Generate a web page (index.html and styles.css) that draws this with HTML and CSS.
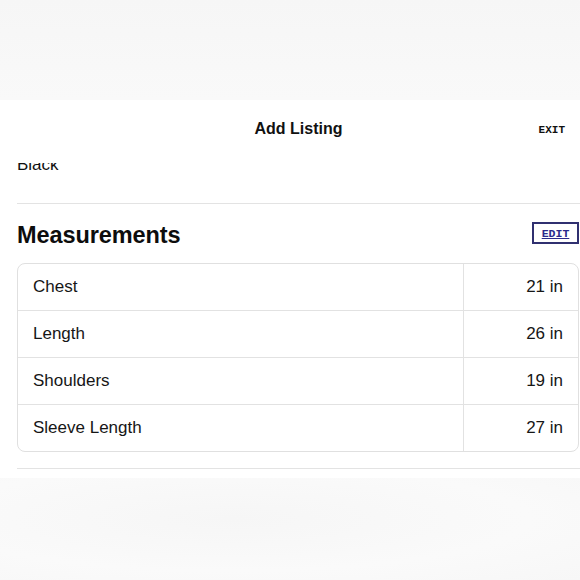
FILE: index.html
```html
<!DOCTYPE html>
<html>
<head>
<meta charset="utf-8">
<link rel="stylesheet" href="styles.css">
</head>
<body>
<div class="backdrop-top"></div>
<main class="panel">
  <header class="bar">
    <div class="bar-side"></div>
    <h1 class="bar-title">Add Listing</h1>
    <div class="bar-side bar-right"><span class="exit">EXIT</span></div>
  </header>
  <section class="content">
    <p class="prev-value">Black</p>
    <hr class="divider">
    <div class="section-head">
      <h2 class="section-title">Measurements</h2>
      <a class="edit-btn" href="#">EDIT</a>
    </div>
    <div class="table">
      <div class="row"><div class="cell label">Chest</div><div class="cell value">21 in</div></div>
      <div class="row"><div class="cell label">Length</div><div class="cell value">26 in</div></div>
      <div class="row"><div class="cell label">Shoulders</div><div class="cell value">19 in</div></div>
      <div class="row"><div class="cell label">Sleeve Length</div><div class="cell value">27 in</div></div>
    </div>
    <hr class="divider bottom">
  </section>
</main>
<div class="backdrop-bottom"></div>
</body>
</html>
```
FILE: styles.css
```css
html, body {
  margin: 0;
  padding: 0;
}
body {
  width: 580px;
  height: 580px;
  overflow: hidden;
  background: #f8f8f8;
  font-family: "Liberation Sans", Arial, sans-serif;
  color: #111;
}
.backdrop-top {
  height: 100px;
  background: linear-gradient(180deg, #f6f6f6 0%, #f9f9f9 100%);
}
.panel {
  background: #fff;
  height: 378px;
  overflow: hidden;
  display: flex;
  flex-direction: column;
}
.bar {
  height: 58px;
  flex: none;
  display: flex;
  align-items: center;
  padding: 0 15px 0 17px;
  background: #fff;
  position: relative;
  z-index: 1;
}
.bar-side {
  flex: 1;
}
.bar-right {
  display: flex;
  justify-content: flex-end;
}
.bar-title {
  margin: 0;
  font-size: 16px;
  font-weight: 700;
  color: #111;
  padding-left: 15px;
}
.exit {
  font-family: "Liberation Mono", "DejaVu Sans Mono", monospace;
  font-weight: 700;
  font-size: 11px;
  color: #111;
  margin-top: 1px;
}
.content {
  flex: 1;
  overflow: hidden;
  padding: 0 1px 0 17px;
}
.prev-value {
  margin: -3px 0 0 0;
  font-size: 17px;
  line-height: 20px;
  color: #111;
  clip-path: inset(8px 0 0 0);
}
.divider {
  border: none;
  border-top: 1px solid #e3e3e3;
  margin: 28px -1px 0 0;
  height: 0;
}
.section-head {
  display: flex;
  align-items: center;
  justify-content: space-between;
  height: 59px;
}
.section-title {
  margin: 3px 0 0 0;
  font-size: 23.5px;
  font-weight: 700;
  color: #0d0d0d;
  letter-spacing: -0.1px;
}
.edit-btn {
  display: flex;
  align-items: center;
  justify-content: center;
  width: 43px;
  height: 18px;
  border: 2px solid #303070;
  font-family: "Liberation Mono", "DejaVu Sans Mono", monospace;
  font-weight: 700;
  font-size: 11.5px;
  color: #2a2a8c;
  text-decoration: underline;
  margin-top: -1px;
}
.table {
  border: 1px solid #e0e0e0;
  border-radius: 8px;
  overflow: hidden;
}
.row {
  display: flex;
  height: 46px;
  border-top: 1px solid #e2e2e2;
}
.row:first-child {
  border-top: none;
}
.cell {
  display: flex;
  align-items: center;
  font-size: 17px;
  color: #161616;
}
.label {
  flex: 1;
  padding-left: 15px;
}
.value {
  width: 99px;
  padding-right: 15px;
  justify-content: flex-end;
  border-left: 1px solid #e2e2e2;
}
.divider.bottom {
  margin-top: 16px;
}
.backdrop-bottom {
  height: 102px;
  background: radial-gradient(ellipse at 40% 40%, #f6f6f6 0%, #fafafa 60%, #f7f7f7 100%);
}
```
